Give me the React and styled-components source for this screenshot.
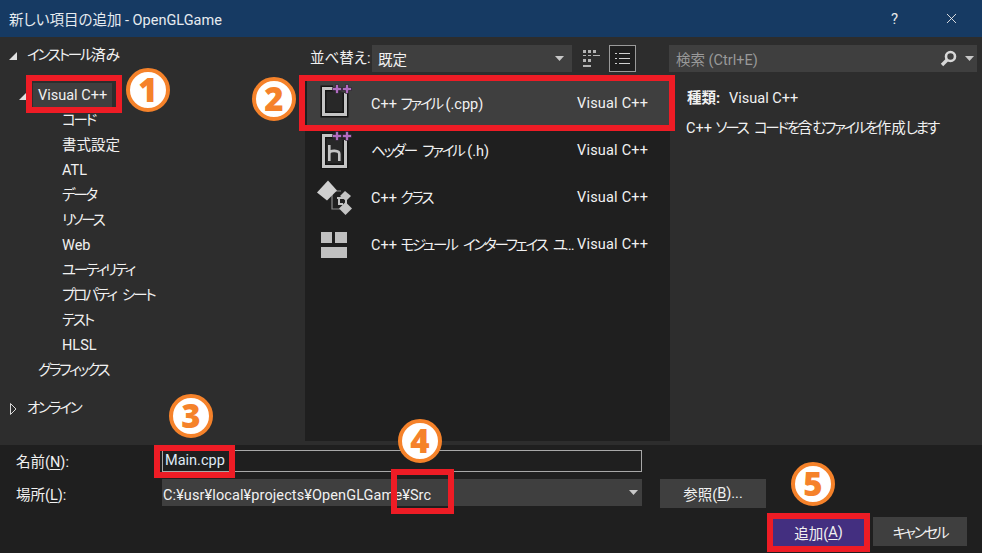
import React from "react";
import styled, { createGlobalStyle } from "styled-components";
import { X } from "lucide-react";

const Global = createGlobalStyle`
  html, body { margin: 0; padding: 0; background: #1f1f1f; }
  body {
    font-family: Roboto, "Noto Sans CJK JP", sans-serif;
    font-size: 14.5px;
    font-feature-settings: "palt";
    color: #f1f1f1;
  }
`;

const Dialog = styled.div`
  position: relative;
  width: 982px;
  height: 553px;
  overflow: hidden;
  display: flex;
  flex-direction: column;
`;

const TitleBar = styled.div`
  height: 37px;
  flex: none;
  background: #163a63;
  display: flex;
  align-items: center;
  padding: 0 2px 0 9px;
  color: #e6ebf0;
`;

const Title = styled.div`
  flex: 1;
`;

const TitleButton = styled.div`
  width: 57px;
  display: flex;
  justify-content: center;
  align-items: center;
  color: #e8e8e8;
  font-size: 15px;
`;

/* the reference's UI font has much narrower kana than Noto */
const Kana = styled.span`
  letter-spacing: -2.2px;
  word-spacing: 5px;
`;

const Main = styled.div`
  height: 408px;
  flex: none;
  background: #2d2d2d;
  display: grid;
  grid-template-columns: 305px 365px 312px;
`;

const Tree = styled.div`
  padding-top: 6px;
`;

const TreeRow = styled.div`
  height: 25px;
  display: flex;
  align-items: center;
  padding-left: ${(p) => p.$indent}px;
  margin-bottom: ${(p) => p.$gap || 0}px;
`;

const TreeArrow = styled.svg`
  width: 10px;
  height: 12px;
  flex: none;
  margin-left: ${(p) => p.$left}px;
  margin-right: ${(p) => p.$right}px;
`;

const TreeLabel = styled.span`
  padding: ${(p) => (p.$selected ? "0 5px" : "0")};
  margin-left: ${(p) => (p.$selected ? "-5px" : "0")};
  background: ${(p) => (p.$selected ? "#3f3f3f" : "transparent")};
  line-height: 25px;
  white-space: nowrap;
`;

const Center = styled.div`
  display: flex;
  flex-direction: column;
`;

const SortBar = styled.div`
  height: 38px;
  flex: none;
  display: flex;
  align-items: flex-start;
  padding: 8px 0 0 5px;
  box-sizing: border-box;
`;

const SortLabel = styled.span`
  width: 62px;
  line-height: 27px;
`;

const SortSelect = styled.div`
  width: 200px;
  height: 27px;
  background: #3f3f3f;
  display: flex;
  align-items: center;
  justify-content: space-between;
  padding: 0 8px 0 6px;
  box-sizing: border-box;
`;

const ViewButton = styled.div`
  width: 27px;
  height: 27px;
  box-sizing: border-box;
  display: flex;
  align-items: center;
  justify-content: center;
  margin-left: ${(p) => p.$left}px;
  border: 1px solid ${(p) => (p.$active ? "#9a9a9a" : "transparent")};
  background: ${(p) => (p.$active ? "#1f1f1f" : "transparent")};
`;

const List = styled.div`
  height: 366px;
  background: #1f1f1f;
  padding: 4px 0 0 0;
  box-sizing: border-box;
`;

const ListRow = styled.div`
  height: 47px;
  margin-left: 2px;
  display: grid;
  grid-template-columns: 64px 204px 1fr;
  align-items: center;
  background: ${(p) => (p.$selected ? "#3f3f3f" : "transparent")};
`;

const IconCell = styled.div`
  display: flex;
  justify-content: center;
  padding-right: 10px;
`;

const RowName = styled.span`
  white-space: nowrap;
  overflow: hidden;
  text-overflow: ellipsis;
`;

const RowKind = styled.span`
  padding: 2px 0 0 2px;
  letter-spacing: 0.2px;
`;

const Side = styled.div`
  padding: 8px 5px 0 0;
`;

const Search = styled.div`
  height: 27px;
  margin-left: -1px;
  background: #3f3f3f;
  display: flex;
  align-items: center;
  padding: 0 3px 0 7px;
  color: #999;
`;

const SearchText = styled.span`
  flex: 1;
`;

const SearchCaret = styled.span`
  display: flex;
  margin-left: 8px;
`;

const Info = styled.div`
  padding: 17px 0 0 16px;
`;

const InfoLine = styled.div`
  height: 30px;
  line-height: 20px;
`;

const Strong = styled.strong`
  font-weight: 700;
  margin: 0 9px 0 1px;
`;

const Footer = styled.div`
  flex: 1;
  padding: 5px 15px 0 16px;
  display: flex;
  flex-direction: column;
`;

const FieldRow = styled.div`
  display: flex;
  align-items: flex-start;
  height: ${(p) => p.$height}px;
  margin-bottom: ${(p) => p.$gap}px;
`;

const FieldLabel = styled.span`
  width: 146px;
  flex: none;
  line-height: ${(p) => p.$line}px;
`;

const NameInput = styled.div`
  width: 480px;
  height: 22px;
  box-sizing: border-box;
  border: 1px solid #a8a8a8;
  padding-left: 2px;
  line-height: 20px;
  color: #dfeaf5;
`;

const PathSelect = styled.div`
  width: 480px;
  height: 27px;
  box-sizing: border-box;
  background: #3f3f3f;
  display: flex;
  align-items: center;
  justify-content: space-between;
  padding: 0 4px 0 1px;
  letter-spacing: 0.1px;
`;

const PathText = styled.span`
  padding-top: 6px;
`;

const Button = styled.div`
  width: ${(p) => p.$width}px;
  height: ${(p) => p.$height}px;
  margin-left: ${(p) => p.$left}px;
  background: ${(p) => (p.$primary ? "#432f80" : "#3f3f3f")};
  display: flex;
  align-items: center;
  justify-content: center;
  flex: none;
`;

const Actions = styled.div`
  display: flex;
  justify-content: flex-end;
  align-items: flex-end;
  height: 29px;
  margin-top: 9px;
`;

const Key = styled.span`
  text-decoration: underline;
  text-underline-offset: 2px;
`;

/* annotations laid over the dialog */
const RedFrame = styled.div`
  position: absolute;
  left: ${(p) => p.$x}px;
  top: ${(p) => p.$y}px;
  width: ${(p) => p.$w}px;
  height: ${(p) => p.$h}px;
  box-sizing: border-box;
  border: 6px solid #ee1c25;
`;

const Badge = styled.div`
  position: absolute;
  left: ${(p) => p.$x}px;
  top: ${(p) => p.$y}px;
  width: 44px;
  height: 44px;
  box-sizing: border-box;
  border-radius: 50%;
  background: #fff;
  border: 4px solid #f5822a;
  color: #f5822a;
  font-family: "Open Sans", sans-serif;
  font-weight: 800;
  font-size: 33px;
  line-height: 35px;
  text-align: center;
`;

const Caret = () => (
  <svg width="9" height="5" viewBox="0 0 9 5">
    <polygon points="0,0 9,0 4.5,5" fill="#c8c8c8" />
  </svg>
);

const Expanded = ({ left, right }) => (
  <TreeArrow $left={left} $right={right} viewBox="0 0 10 12">
    <polygon points="9,2 9,10 1,10" fill="#e0e0e0" />
  </TreeArrow>
);

const Collapsed = ({ left, right }) => (
  <TreeArrow $left={left} $right={right} viewBox="0 0 10 12">
    <polygon points="1.5,0.5 7,6 1.5,11.5" fill="none" stroke="#d8d8d8" />
  </TreeArrow>
);

const Plus = ({ cx }) => (
  <path
    d={`M${cx - 4.5} 3.5h3v-3h3v3h3v3h-3v3h-3v-3h-3z`}
    fill="#b06cc0"
    stroke="#1a1a1a"
    strokeWidth="0.6"
  />
);

const FileIcon = ({ bottom = 30.5, children }) => {
  const d = `M17 4.5H7.5V${bottom}H29.5V9`;
  return (
    <svg width="36" height="38" viewBox="0 0 36 38">
      <path d={`${d}Z`} fill="#282828" stroke="none" />
      <path d={d} fill="none" stroke="#141414" strokeWidth="6" />
      <path d={d} fill="none" stroke="#c4c4c4" strokeWidth="3" />
      {children}
      <Plus cx={21} />
      <Plus cx={31} />
    </svg>
  );
};

const ClassIcon = () => (
  <svg width="38" height="38" viewBox="0 0 38 38">
    <path d="M17 13v18h8M19 13h7" fill="none" stroke="#8a8a8a" strokeWidth="1.2" />
    <path d="M22 20h9v8M24 20v6h4" fill="none" stroke="#c4c4c4" strokeWidth="2" />
    <polygon points="2,14.5 13,2.5 22,12.5 12,22.5" fill="#d0d0d0" />
    <polygon points="25,18 30,13 36,18 31,23" fill="#c4c4c4" />
    <polygon points="24,30.5 30.5,24 37,30.5 30.5,37" fill="#c4c4c4" />
  </svg>
);

const ModuleIcon = () => (
  <svg width="26" height="26" viewBox="0 0 26 26" style={{ marginTop: 2 }}>
    <g fill="#c0c0c0">
      <rect x="0" y="0" width="11" height="11" />
      <rect x="14" y="0" width="12" height="11" />
      <rect x="0" y="15" width="26" height="11" />
    </g>
  </svg>
);

const GridIcon = () => (
  <svg width="17" height="18" viewBox="0 0 17 18" fill="#b4b4b4">
    <rect x="0" y="0" width="3" height="3" />
    <rect x="5" y="0" width="3" height="3" />
    <rect x="10" y="0" width="3" height="3" />
    <rect x="0" y="5" width="3" height="1" />
    <rect x="5" y="5" width="3" height="1" />
    <rect x="10" y="5" width="7" height="1" />
    <rect x="0" y="9" width="3" height="3" />
    <rect x="5" y="9" width="3" height="3" />
    <rect x="0" y="15" width="8" height="2" />
  </svg>
);

const LinesIcon = () => (
  <svg width="15" height="13" viewBox="0 0 15 13" fill="#d0d0d0">
    <rect x="0" y="1" width="2" height="1" />
    <rect x="4" y="1" width="11" height="1" />
    <rect x="0" y="6" width="2" height="1" />
    <rect x="4" y="6" width="11" height="1" />
    <rect x="0" y="11" width="2" height="1" />
    <rect x="4" y="11" width="11" height="1" />
  </svg>
);

const SearchIcon = () => (
  <svg width="17" height="17" viewBox="0 0 17 17">
    <circle cx="10.5" cy="6.5" r="4.5" fill="none" stroke="#d8d8d8" strokeWidth="2.6" />
    <path d="M7 10l-5 5" stroke="#d8d8d8" strokeWidth="3.4" />
  </svg>
);

const treeItems = [
  { id: "code", label: <Kana>コード</Kana> },
  { id: "format", label: "書式設定" },
  { id: "atl", label: "ATL" },
  { id: "data", label: <Kana>データ</Kana> },
  { id: "res", label: <Kana>リソース</Kana> },
  { id: "web", label: "Web" },
  { id: "util", label: <Kana>ユーティリティ</Kana> },
  { id: "prop", label: <Kana>プロパティ シート</Kana> },
  { id: "test", label: <Kana>テスト</Kana> },
  { id: "hlsl", label: "HLSL" },
];

const rows = [
  {
    id: "cpp",
    name: <>C++ <Kana>ファイル</Kana> (.cpp)</>,
    selected: true,
    icon: <FileIcon />,
  },
  {
    id: "h",
    name: <><Kana>ヘッダー ファイル</Kana> (.h)</>,
    icon: (
      <FileIcon bottom={35.5}>
        <path d="M13.3 14v16M13.3 22c1-3 10-3 10 1v7" fill="none" stroke="#c4c4c4" strokeWidth="2.6" />
      </FileIcon>
    ),
  },
  { id: "class", name: <>C++ <Kana>クラス</Kana></>, icon: <ClassIcon /> },
  {
    id: "module",
    name: <>C++ <Kana>モジュール インターフェイス ユニット</Kana> (.ixx)</>,
    icon: <ModuleIcon />,
  },
];

const frames = [
  { x: 26, y: 75, w: 96, h: 38 },
  { x: 299, y: 75, w: 376, h: 56 },
  { x: 154, y: 445, w: 81, h: 33 },
  { x: 391, y: 469, w: 63, h: 45 },
  { x: 767, y: 513, w: 103, h: 39 },
];

const badges = [
  { x: 126, y: 68, n: 1 },
  { x: 252, y: 77, n: 2 },
  { x: 169, y: 394, n: 3 },
  { x: 398, y: 419, n: 4 },
  { x: 791, y: 462, n: 5 },
];

const App = () => (
  <Dialog>
    <Global />
    <TitleBar>
      <Title>新しい項目の追加 - OpenGLGame</Title>
      <TitleButton>?</TitleButton>
      <TitleButton>
        <X size={17} strokeWidth={1.3} />
      </TitleButton>
    </TitleBar>
    <Main>
      <Tree>
        <TreeRow $indent={0} $gap={15}>
          <Expanded left={8} right={9} />
          <TreeLabel><Kana>インストール</Kana>済み</TreeLabel>
        </TreeRow>
        <TreeRow $indent={0}>
          <Expanded left={18} right={10} />
          <TreeLabel $selected>Visual C++</TreeLabel>
        </TreeRow>
        {treeItems.map((item) => (
          <TreeRow key={item.id} $indent={62}>
            <TreeLabel>{item.label}</TreeLabel>
          </TreeRow>
        ))}
        <TreeRow $indent={38} $gap={13}>
          <TreeLabel><Kana>グラフィックス</Kana></TreeLabel>
        </TreeRow>
        <TreeRow $indent={0}>
          <Collapsed left={9} right={8} />
          <TreeLabel><Kana>オンライン</Kana></TreeLabel>
        </TreeRow>
      </Tree>
      <Center>
        <SortBar>
          <SortLabel>並べ替え:</SortLabel>
          <SortSelect>
            <span>既定</span>
            <Caret />
          </SortSelect>
          <ViewButton $left={6}>
            <GridIcon />
          </ViewButton>
          <ViewButton $left={4} $active>
            <LinesIcon />
          </ViewButton>
        </SortBar>
        <List>
          {rows.map((row) => (
            <ListRow key={row.id} $selected={row.selected}>
              <IconCell>{row.icon}</IconCell>
              <RowName>{row.name}</RowName>
              <RowKind>Visual C++</RowKind>
            </ListRow>
          ))}
        </List>
      </Center>
      <Side>
        <Search>
          <SearchText>検索 (Ctrl+E)</SearchText>
          <SearchIcon />
          <SearchCaret>
            <Caret />
          </SearchCaret>
        </Search>
        <Info>
          <InfoLine>
            <Strong>種類:</Strong>Visual C++
          </InfoLine>
          <InfoLine>
            C++ <Kana>ソース コードを</Kana>含<Kana>むファイルを</Kana>作成<Kana>します</Kana>
          </InfoLine>
        </Info>
      </Side>
    </Main>
    <Footer>
      <FieldRow $height={22} $gap={7}>
        <FieldLabel $line={26}>
          名前(<Key>N</Key>):
        </FieldLabel>
        <NameInput>Main.cpp</NameInput>
      </FieldRow>
      <FieldRow $height={29} $gap={0}>
        <FieldLabel $line={33}>
          場所(<Key>L</Key>):
        </FieldLabel>
        <PathSelect>
          <PathText>C:¥usr¥local¥projects¥OpenGLGame¥Src</PathText>
          <Caret />
        </PathSelect>
        <Button $width={106} $height={29} $left={18}>
          参照(<Key>B</Key>)...
        </Button>
      </FieldRow>
      <Actions>
        <Button $primary $width={91} $height={27} $left={0}>
          追加(<Key>A</Key>)
        </Button>
        <Button $width={94} $height={29} $left={9}>
          <Kana>キャンセル</Kana>
        </Button>
      </Actions>
    </Footer>
    {frames.map((f) => (
      <RedFrame key={f.x} $x={f.x} $y={f.y} $w={f.w} $h={f.h} />
    ))}
    {badges.map((b) => (
      <Badge key={b.n} $x={b.x} $y={b.y}>
        {b.n}
      </Badge>
    ))}
  </Dialog>
);

export default App;
